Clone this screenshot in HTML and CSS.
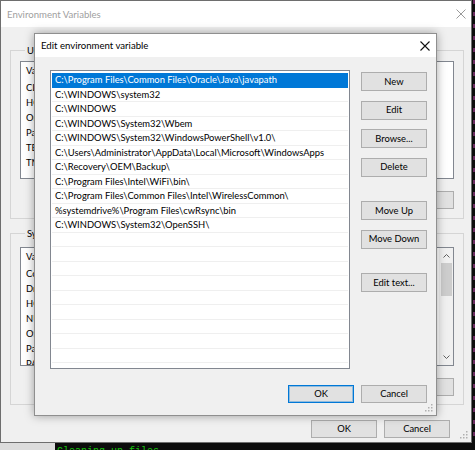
FILE: index.html
```html
<!DOCTYPE html>
<html lang="en">
<head>
<meta charset="utf-8">
<title>Edit environment variable</title>
<link rel="stylesheet" href="styles.css">
</head>
<body>
<div class="desktop">
  <div class="under-strip">
    <div class="under-light"></div>
    <div class="terminal"><span>Cleaning up files</span></div>
  </div>
  <div class="edge-marks"></div>

  <section class="window env">
    <header class="titlebar inactive">
      <span class="title">Environment Variables</span>
      <svg class="close" width="10" height="10" viewBox="0 0 10 10"><path d="M0.5 0.5L9.5 9.5M9.5 0.5L0.5 9.5" stroke="#9a9a9a" stroke-width="1"/></svg>
    </header>
    <div class="env-body">
      <div class="group user-group">
        <span class="legend">User variables for Administrator</span>
        <div class="varlist user-list">
          <div class="vrow vhead"><span class="c1">Variable</span><span>Value</span></div>
          <div class="vrow"><span class="c1">CLASSPATH</span><span>.;</span></div>
          <div class="vrow"><span class="c1">HOME</span><span>C:\Users\Administrator</span></div>
          <div class="vrow"><span class="c1">OneDrive</span><span>C:\Users\Administrator\OneDrive</span></div>
          <div class="vrow"><span class="c1">Path</span><span>C:\Program Files\Common Files\Oracle\Java\javapath</span></div>
          <div class="vrow"><span class="c1">TEMP</span><span>%USERPROFILE%\AppData\Local\Temp</span></div>
          <div class="vrow"><span class="c1">TMP</span><span>%USERPROFILE%\AppData\Local\Temp</span></div>
        </div>
        <div class="btnrow">
          <button class="btn">New...</button>
          <button class="btn">Edit...</button>
          <button class="btn">Delete</button>
        </div>
      </div>
      <div class="group sys-group">
        <span class="legend">System variables</span>
        <div class="varlist sys-list">
          <div class="sys-rows">
            <div class="vrow vhead"><span class="c1">Variable</span><span>Value</span></div>
            <div class="vrow"><span class="c1">ComSpec</span><span>C:\WINDOWS\system32\cmd.exe</span></div>
            <div class="vrow"><span class="c1">DriverData</span><span>C:\Windows\System32\Drivers\DriverData</span></div>
            <div class="vrow"><span class="c1">HOME</span><span>C:\Users\Administrator</span></div>
            <div class="vrow"><span class="c1">NUMBER_OF_PROCESSORS</span><span>4</span></div>
            <div class="vrow"><span class="c1">OS</span><span>Windows_NT</span></div>
            <div class="vrow"><span class="c1">Path</span><span>C:\Program Files\Common Files\Oracle\Java\javapath</span></div>
            <div class="vrow"><span class="c1">PATHEXT</span><span>.COM;.EXE;.BAT;.CMD</span></div>
          </div>
          <div class="vscroll">
            <svg class="arrow" width="7" height="4" viewBox="0 0 7 4"><path d="M0.5 3.5L3.5 0.5L6.5 3.5" fill="none" stroke="#606060"/></svg>
            <div class="thumb"></div>
            <div class="track"></div>
            <svg class="arrow" width="7" height="4" viewBox="0 0 7 4"><path d="M0.5 0.5L3.5 3.5L6.5 0.5" fill="none" stroke="#606060"/></svg>
          </div>
        </div>
        <div class="btnrow">
          <button class="btn">New...</button>
          <button class="btn">Edit...</button>
          <button class="btn">Delete</button>
        </div>
      </div>
      <div class="env-footer">
        <button class="btn">OK</button>
        <button class="btn">Cancel</button>
      </div>
    </div>
    <svg class="grip" width="8" height="8" viewBox="0 0 8 8"><g fill="#b0b0b0"><rect x="6" y="0" width="1.5" height="1.5"/><rect x="6" y="3" width="1.5" height="1.5"/><rect x="3" y="3" width="1.5" height="1.5"/><rect x="6" y="6" width="1.5" height="1.5"/><rect x="3" y="6" width="1.5" height="1.5"/><rect x="0" y="6" width="1.5" height="1.5"/></g></svg>
  </section>

  <section class="window dialog">
    <header class="titlebar">
      <span class="title">Edit environment variable</span>
      <svg class="close" width="10" height="10" viewBox="0 0 10 10"><path d="M0.5 0.5L9.5 9.5M9.5 0.5L0.5 9.5" stroke="#111" stroke-width="1.1"/></svg>
    </header>
    <div class="dlg-body">
      <div class="dlg-main">
        <div class="pathlist">
          <div class="prow selected">C:\Program Files\Common Files\Oracle\Java\javapath</div>
          <div class="prow">C:\WINDOWS\system32</div>
          <div class="prow">C:\WINDOWS</div>
          <div class="prow">C:\WINDOWS\System32\Wbem</div>
          <div class="prow">C:\WINDOWS\System32\WindowsPowerShell\v1.0\</div>
          <div class="prow">C:\Users\Administrator\AppData\Local\Microsoft\WindowsApps</div>
          <div class="prow">C:\Recovery\OEM\Backup\</div>
          <div class="prow">C:\Program Files\Intel\WiFi\bin\</div>
          <div class="prow">C:\Program Files\Common Files\Intel\WirelessCommon\</div>
          <div class="prow">%systemdrive%\Program Files\cwRsync\bin</div>
          <div class="prow">C:\WINDOWS\System32\OpenSSH\</div>
          <div class="prow"></div>
          <div class="prow"></div>
          <div class="prow"></div>
          <div class="prow"></div>
          <div class="prow"></div>
          <div class="prow"></div>
          <div class="prow"></div>
          <div class="prow"></div>
          <div class="prow"></div>
        </div>
        <div class="btncol">
          <button class="btn">New</button>
          <button class="btn">Edit</button>
          <button class="btn">Browse...</button>
          <button class="btn">Delete</button>
          <button class="btn sep">Move Up</button>
          <button class="btn">Move Down</button>
          <button class="btn sep">Edit text...</button>
        </div>
      </div>
      <div class="dlg-footer">
        <button class="btn default">OK</button>
        <button class="btn">Cancel</button>
      </div>
    </div>
    <svg class="grip" width="8" height="8" viewBox="0 0 8 8"><g fill="#b0b0b0"><rect x="6" y="0" width="1.5" height="1.5"/><rect x="6" y="3" width="1.5" height="1.5"/><rect x="3" y="3" width="1.5" height="1.5"/><rect x="6" y="6" width="1.5" height="1.5"/><rect x="3" y="6" width="1.5" height="1.5"/><rect x="0" y="6" width="1.5" height="1.5"/></g></svg>
  </section>
</div>
</body>
</html>
```
FILE: styles.css
```css
* { box-sizing: border-box; }
html, body { margin: 0; padding: 0; }
body {
  width: 475px;
  height: 450px;
  overflow: hidden;
  background: #0c0c0c;
  font-family: Lato, "Noto Sans", sans-serif;
  font-size: 9.4px;
  color: #000;
}
.desktop { position: relative; width: 475px; height: 450px; overflow: hidden; }

/* things behind the windows */
.under-strip {
  position: absolute;
  left: 0;
  top: 443px;
  width: 475px;
  height: 7px;
  display: flex;
}
.under-light { width: 55px; background: #dcdcdc; }
.terminal {
  flex: 1;
  background: #0c0c0c;
  overflow: hidden;
  padding-left: 2px;
}
.terminal span {
  display: block;
  color: #16c60c;
  font-family: "Liberation Mono", monospace;
  font-size: 10px;
  line-height: 12px;
  margin-top: 3px;
}
.edge-marks {
  position: absolute;
  right: 0;
  top: 0;
  width: 2px;
  height: 443px;
  background: repeating-linear-gradient(to bottom, #6a2a5e 0 4px, #0c0c0c 4px 12px);
}

/* window chrome */
.window {
  position: absolute;
  display: flex;
  flex-direction: column;
  background: #f0f0f0;
}
.titlebar {
  display: flex;
  align-items: center;
  justify-content: space-between;
  background: #fff;
  flex: none;
}
.titlebar .title { font-size: 9.6px; }
.titlebar.inactive .title { color: #a0a0a0; }
.grip { position: absolute; right: 3px; bottom: 3px; }

.btn {
  font-family: inherit;
  font-size: 9.4px;
  color: #000;
  background: #e1e1e1;
  border: 1px solid #adadad;
  border-radius: 0;
  padding: 0;
  margin: 0;
  height: 19px;
  width: 66px;
  line-height: 16px;
  text-align: center;
}
.btn.default {
  border-color: #0078d7;
  box-shadow: inset 0 0 0 1px rgba(0, 120, 215, 0.35);
}

/* Environment Variables window (behind) */
.env {
  left: 0;
  top: 0;
  width: 472px;
  height: 443px;
  border: 1px solid #6e6e6e;
}
.env .titlebar { height: 26px; padding: 0 5px 0 6px; }
.env-body {
  flex: 1;
  display: flex;
  flex-direction: column;
  padding: 23px 7px 0 9px;
}
.group {
  border: 1px solid #d5d5d5;
  padding: 0 9px 9px 9px;
  display: flex;
  flex-direction: column;
}
.sys-group { margin-top: 14px; padding-bottom: 8px; }
.legend {
  align-self: flex-start;
  margin: -8px 0 0 5px;
  padding: 0 2px;
  height: 16px;
  line-height: 16px;
  background: #f0f0f0;
}
.varlist {
  margin-top: 2px;
  background: #fff;
  border: 1px solid #828790;
  overflow: hidden;
}
.user-list { height: 118px; }
.sys-list {
  margin-top: 5px;
  height: 119px;
  display: flex;
}
.sys-rows { flex: 1; overflow: hidden; }
.vrow {
  display: flex;
  height: 15px;
  line-height: 15px;
  padding-left: 5px;
  white-space: nowrap;
}
.vrow.vhead { height: 17.5px; line-height: 17.5px; }
.vrow .c1 { width: 150px; flex: none; }
.vscroll {
  width: 14px;
  flex: none;
  background: #f0f0f0;
  display: flex;
  flex-direction: column;
  align-items: center;
  padding: 6px 0 6px;
}
.vscroll .thumb { width: 11px; height: 33px; background: #cdcdcd; margin-top: 5px; }
.vscroll .track { flex: 1; }
.btnrow {
  display: flex;
  justify-content: flex-end;
  gap: 7px;
  margin-top: 12px;
}
.btnrow .btn { height: 18px; }
.env-footer {
  display: flex;
  justify-content: flex-end;
  gap: 7px;
  margin-top: 15px;
  padding-right: 14px;
}
.env-footer .btn { height: 18px; }

/* Edit environment variable dialog (front) */
.dialog {
  left: 34px;
  top: 33px;
  width: 403px;
  height: 383px;
  border: 1px solid #8f8f8f;
  box-shadow: 0 0 9px rgba(0, 0, 0, 0.35);
}
.dialog .titlebar { height: 23px; padding: 0 6px 0 6px; }
.dlg-body {
  flex: 1;
  display: flex;
  flex-direction: column;
  padding: 13px 9px 12px 15px;
}
.dlg-main {
  display: flex;
  gap: 11px;
}
.pathlist {
  width: 300px;
  height: 299px;
  background: #fff;
  border: 1px solid #828790;
  padding: 2px 1px;
  overflow: hidden;
}
.prow {
  height: 14.5px;
  line-height: 14px;
  padding-left: 3px;
  border-bottom: 1px solid #efefef;
  white-space: nowrap;
  overflow: hidden;
}
.prow.selected {
  background: #0078d7;
  color: #fff;
  border-bottom-color: #0078d7;
}
.btncol {
  display: flex;
  flex-direction: column;
  gap: 9.5px;
  padding-top: 2px;
}
.btncol .sep { margin-top: 15px; }
.dlg-footer {
  display: flex;
  justify-content: flex-end;
  gap: 7px;
  margin-top: 16px;
}
.dlg-footer .btn { height: 18px; }
```
